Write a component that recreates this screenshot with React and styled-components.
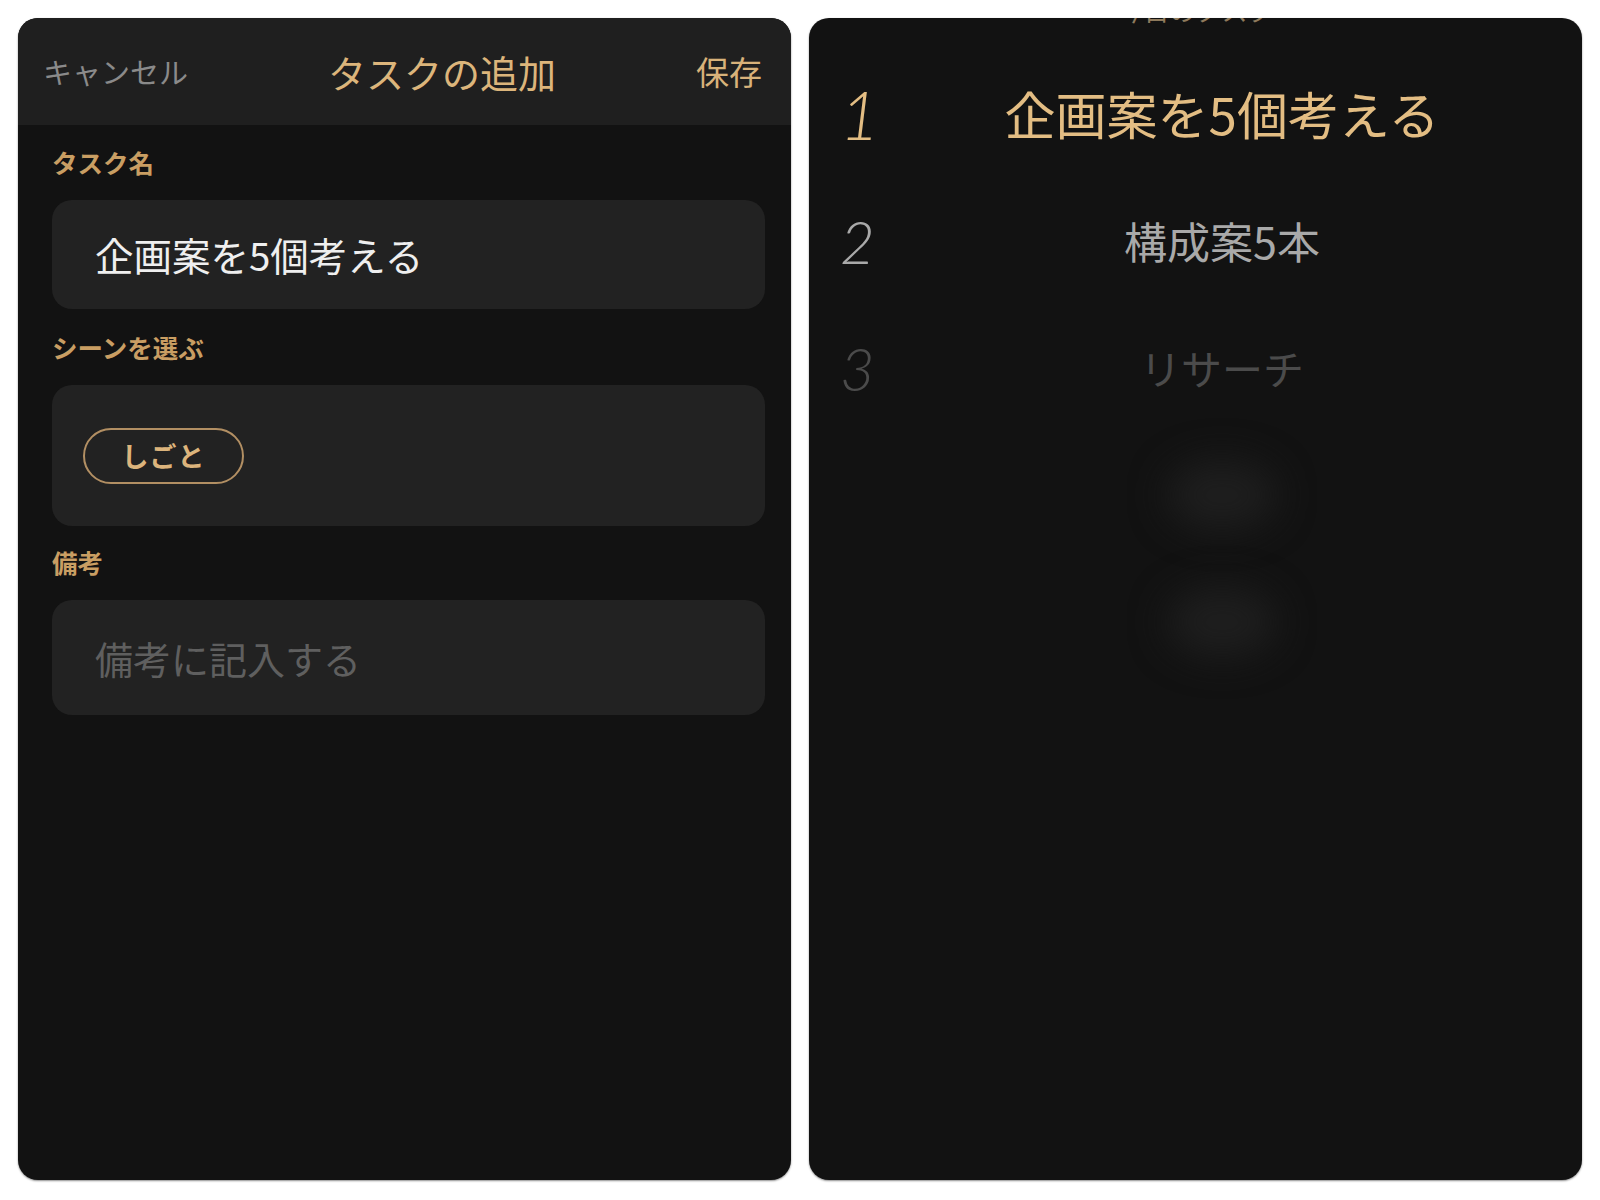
import styled, { createGlobalStyle } from "styled-components";

const GlobalStyle = createGlobalStyle`
  html, body {
    margin: 0;
    padding: 0;
    background: #ffffff;
  }
  body {
    font-family: "Noto Sans CJK JP", "Noto Sans", sans-serif;
  }
`;

const Page = styled.div`
  display: grid;
  grid-template-columns: 773px 773px;
  gap: 18px;
  padding: 18px 18px 20px 18px;
  width: 1600px;
  height: 1200px;
  box-sizing: border-box;
`;

const Panel = styled.div`
  display: flex;
  flex-direction: column;
  background: #121212;
  border-radius: 20px;
  overflow: hidden;
  box-shadow: 0 1px 2px rgba(0, 0, 0, 0.45);
`;

const Header = styled.div`
  height: 107px;
  flex-shrink: 0;
  display: flex;
  align-items: center;
  justify-content: space-between;
  padding: 0 29px 0 25px;
  background: #1f1f1f;
`;

const HeaderText = styled.span`
  font-size: ${(p) => p.size}px;
  color: ${(p) => p.color};
  line-height: 1;
`;

const Body = styled.div`
  display: flex;
  flex-direction: column;
  padding: 24px 26px 0 34px;
`;

const Label = styled.div`
  font-size: 25.5px;
  font-weight: 700;
  line-height: 25px;
  color: #c99e63;
  margin-top: ${(p) => p.top || 0}px;
`;

const Field = styled.div`
  margin-top: 26px;
  height: ${(p) => p.h}px;
  box-sizing: border-box;
  background: #222222;
  border-radius: 20px;
  display: flex;
  align-items: center;
  padding-left: ${(p) => p.pad}px;
`;

const FieldText = styled.span`
  font-size: ${(p) => (p.placeholder ? 38 : 38.5)}px;
  line-height: 1;
  color: ${(p) => (p.placeholder ? "#5f5f5f" : "#efefef")};
`;

const Chip = styled.div`
  width: 161px;
  height: 56px;
  box-sizing: border-box;
  border: 2px solid #b28f63;
  border-radius: 28px;
  display: flex;
  align-items: center;
  justify-content: center;
  font-size: 27px;
  font-weight: 700;
  color: #dcb47c;
  letter-spacing: 1px;
`;

const TopCut = styled.div`
  margin-top: -23px;
  height: 30px;
  line-height: 30px;
  text-align: center;
  font-size: 26px;
  color: #8e7a5c;
`;

const List = styled.div`
  display: flex;
  flex-direction: column;
  padding-top: 25px;
`;

const Row = styled.div`
  height: 127px;
  display: grid;
  grid-template-columns: 65px 1fr;
  align-items: center;
  padding: 0 43px 0 31px;
`;

const Num = styled.span`
  font-family: "Lato", "Open Sans", sans-serif;
  font-style: italic;
  font-weight: 300;
  font-size: ${(p) => p.size}px;
  line-height: 1;
  color: ${(p) => p.color};
`;

const ItemText = styled.span`
  text-align: center;
  font-size: ${(p) => p.size}px;
  line-height: 1;
  color: ${(p) => p.color};
`;

const Glow = styled.div`
  justify-self: center;
  width: 110px;
  height: 70px;
  border-radius: 50%;
  background: #1e1e1e;
  filter: blur(18px);
`;

const items = [
  { n: "1", text: "企画案を5個考える", size: 51, numSize: 68, color: "#e3bd83" },
  { n: "2", text: "構成案5本", size: 43, numSize: 60, color: "#a9a9a9" },
  { n: "3", text: "リサーチ", size: 41, numSize: 60, color: "#4b4b4b" },
];

export default function App() {
  return (
    <>
      <GlobalStyle />
      <Page>
        <Panel>
          <Header>
            <HeaderText size={29} color="#8a8a8a">キャンセル</HeaderText>
            <HeaderText size={38} color="#dcb57b">タスクの追加</HeaderText>
            <HeaderText size={33} color="#d8b27a">保存</HeaderText>
          </Header>
          <Body>
            <Label>タスク名</Label>
            <Field h={109} pad={43}>
              <FieldText>企画案を5個考える</FieldText>
            </Field>
            <Label top={25}>シーンを選ぶ</Label>
            <Field h={141} pad={31}>
              <Chip>しごと</Chip>
            </Field>
            <Label top={23}>備考</Label>
            <Field h={115} pad={43}>
              <FieldText placeholder>備考に記入する</FieldText>
            </Field>
          </Body>
        </Panel>
        <Panel>
          <TopCut>今日のタスク</TopCut>
          <List>
            {items.map((it) => (
              <Row key={it.n}>
                <Num size={it.numSize} color={it.color}>
                  {it.n}
                </Num>
                <ItemText size={it.size} color={it.color}>
                  {it.text}
                </ItemText>
              </Row>
            ))}
            <Row>
              <span />
              <Glow />
            </Row>
            <Row>
              <span />
              <Glow />
            </Row>
          </List>
        </Panel>
      </Page>
    </>
  );
}
